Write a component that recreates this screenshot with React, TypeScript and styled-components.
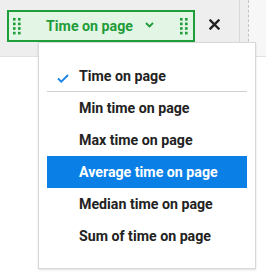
import React from "react";
import styled, { createGlobalStyle } from "styled-components";

const Global = createGlobalStyle`
  html, body { margin: 0; padding: 0; background: #ffffff; }
  body { font-family: Roboto, "Liberation Sans", Arial, sans-serif; }
`;

const Page = styled.div`
  position: relative;
  width: 266px;
  height: 280px;
  overflow: hidden;
  background: #ffffff;
`;

const Toolbar = styled.div`
  display: flex;
  align-items: flex-start;
  height: 56px;
  background: #eeeeee;
  border-bottom: 1px solid #e2e2e2;
`;

const Pill = styled.div`
  box-sizing: border-box;
  display: flex;
  align-items: center;
  margin: 10px 0 0 7px;
  width: 188px;
  height: 32px;
  padding: 0 5px 0 4px;
  background: #e3f5e4;
  border: 2px solid #1e9f3b;
  color: #1e9c3a;
`;

const Grip = styled.svg`
  flex: none;
  width: 8px;
  height: 17px;
  margin-top: 1px;
`;

const PillCenter = styled.div`
  flex: 1;
  display: flex;
  align-items: center;
  justify-content: center;
  gap: 12px;
  padding-right: 1px;
`;

const PillLabel = styled.span`
  font-size: 14.2px;
  font-weight: 700;
  line-height: 20px;
`;

const Chevron = styled.svg`
  width: 9px;
  height: 6px;
  margin-top: -2px;
`;

const CloseButton = styled.button`
  display: flex;
  align-items: center;
  justify-content: center;
  margin: 19px 0 0 14px;
  padding: 0;
  width: 11px;
  height: 11px;
  border: 0;
  background: none;
`;

const Spacer = styled.div`
  flex: 1;
`;

const SidePanel = styled.div`
  display: flex;
  align-self: stretch;
  width: 26px;
  border-left: 1px solid #d9d9d9;
`;

const SideGap = styled.div`
  width: 8px;
`;

const SideLight = styled.div`
  flex: 1;
  background: #f7f7f7;
  border-left: 1px dashed #c4c4c4;
`;

const Menu = styled.div`
  position: absolute;
  left: 38px;
  top: 42px;
  box-sizing: border-box;
  width: 218px;
  height: 227px;
  padding: 17px 8px 0 8px;
  background: #ffffff;
  border: 1px solid #d8d8d8;
  box-shadow: 0 1px 2px rgba(0, 0, 0, 0.12);
`;

const Item = styled.div<{ $active?: boolean; $first?: boolean }>`
  position: relative;
  display: flex;
  align-items: center;
  height: ${(p) => (p.$first ? "31px" : "32px")};
  padding-left: 32px;
  font-size: 14.2px;
  font-weight: 700;
  color: ${(p) => (p.$active ? "#ffffff" : "#222222")};
  background: ${(p) => (p.$active ? "#0a7fe6" : "transparent")};
  white-space: nowrap;
`;

const Check = styled.svg`
  position: absolute;
  left: 10px;
  top: 14px;
  width: 12px;
  height: 9px;
`;

const Separator = styled.div`
  height: 1px;
  background: #cfcfcf;
`;

const GripIcon = () => (
  <Grip viewBox="0 0 8 17">
    {[0, 1].map((c) =>
      [0, 1, 2, 3].map((r) => (
        <rect
          key={`${c}-${r}`}
          x={c * 5}
          y={r * 4.6}
          width={2.6}
          height={2.6}
          fill="#1f9c3b"
        />
      ))
    )}
  </Grip>
);

const items = [
  "Min time on page",
  "Max time on page",
  "Average time on page",
  "Median time on page",
  "Sum of time on page",
];

export default function App() {
  return (
    <Page>
      <Global />
      <Toolbar>
        <Pill>
          <GripIcon />
          <PillCenter>
            <PillLabel>Time on page</PillLabel>
            <Chevron viewBox="0 0 9 6">
              <polyline
                points="1,1 4.5,4.5 8,1"
                fill="none"
                stroke="#1e9c3a"
                strokeWidth="1.8"
              />
            </Chevron>
          </PillCenter>
          <GripIcon />
        </Pill>
        <CloseButton aria-label="Remove">
          <svg width="11" height="11" viewBox="0 0 11 11">
            <path
              d="M1.5 1.5 L9.5 9.5 M9.5 1.5 L1.5 9.5"
              stroke="#222"
              strokeWidth="2.4"
              strokeLinecap="square"
            />
          </svg>
        </CloseButton>
        <Spacer />
        <SidePanel>
          <SideGap />
          <SideLight />
        </SidePanel>
      </Toolbar>
      <Menu>
        <Item $first>
          <Check viewBox="0 0 12 9">
            <polyline
              points="1,4.5 4.3,7.6 11,1"
              fill="none"
              stroke="#1a86e8"
              strokeWidth="1.9"
            />
          </Check>
          Time on page
        </Item>
        <Separator />
        {items.map((t) => (
          <Item key={t} $active={t === "Average time on page"}>
            {t}
          </Item>
        ))}
      </Menu>
    </Page>
  );
}
